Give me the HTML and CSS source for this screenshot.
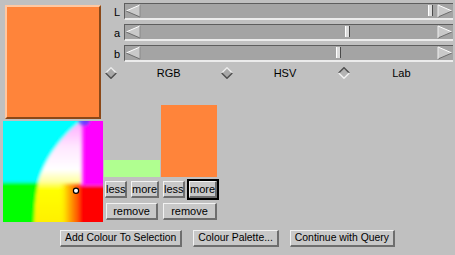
FILE: index.html
```html
<!DOCTYPE HTML>
<html>
<head>
<meta http-equiv="Content-Type" content="text/html; charset=utf-8">
<title>Colour Chooser</title>
<link rel="stylesheet" href="styles.css">
</head>
<body>
<div class="app">
	<div class="top">
		<div class="left">
			<div class="swatch"></div>
			<div class="map">
				<svg width="100" height="101" viewBox="0 0 100 100" preserveAspectRatio="none">
					<defs>
						<filter id="soft" x="-20%" y="-20%" width="140%" height="140%"><feGaussianBlur stdDeviation="1.6"/></filter>
						<linearGradient id="glow" gradientUnits="userSpaceOnUse" x1="0" y1="0" x2="0" y2="100">
							<stop offset="0" stop-color="#ffa8ff"/>
							<stop offset="0.25" stop-color="#ffe6ff"/>
							<stop offset="0.48" stop-color="#ffffff"/>
							<stop offset="0.6" stop-color="#ffffa0"/>
							<stop offset="0.68" stop-color="#ffff00"/>
							<stop offset="1" stop-color="#fff000"/>
						</linearGradient>
						<linearGradient id="warm" gradientUnits="userSpaceOnUse" x1="56" y1="0" x2="80" y2="0">
							<stop offset="0" stop-color="#ffff00" stop-opacity="0"/>
							<stop offset="0.35" stop-color="#ffc000"/>
							<stop offset="0.8" stop-color="#ff5000"/>
							<stop offset="1" stop-color="#ff0000"/>
						</linearGradient>
						<linearGradient id="mag" gradientUnits="userSpaceOnUse" x1="76" y1="0" x2="82" y2="0">
							<stop offset="0" stop-color="#ff90ff"/>
							<stop offset="1" stop-color="#ff00ff"/>
						</linearGradient>
					</defs>
					<rect x="-10" y="-10" width="120" height="120" fill="#00ffff"/>
					<g filter="url(#soft)">
						<rect x="-10" y="-10" width="120" height="120" fill="#00ffff"/>
						<rect x="-10" y="61" width="50" height="60" fill="#00ff00"/>
						<path d="M80,-10 L78,0 Q50,22 38,52 Q31,70 31,110 L110,110 L110,-10 Z" fill="url(#glow)"/>
						<rect x="56" y="62" width="26" height="50" fill="url(#warm)"/>
						<rect x="78" y="64" width="40" height="50" fill="#ff0000"/>
						<rect x="78" y="-10" width="40" height="74" fill="url(#mag)"/>
						<ellipse cx="81" cy="0" rx="6" ry="5" fill="#3050ff" opacity="0.7"/>
					</g>
					<circle cx="73" cy="69" r="2.6" fill="#fff" stroke="#000" stroke-width="1.2"/>
				</svg>
			</div>
		</div>
		<div class="right">
			<div class="row">
				<span class="lbl">L</span>
				<div class="track">
					<svg class="arrow" width="16" height="14" viewBox="0 0 16 14"><polygon points="1,7 15,1 15,13" fill="#c9c9c9"/><line x1="1" y1="7" x2="15" y2="1" stroke="#fff"/><line x1="1" y1="7" x2="15" y2="13" stroke="#6d6d6d"/><line x1="15" y1="1" x2="15" y2="13" stroke="#8a8a8a"/></svg>
					<div class="rail"><span class="thumb" style="left:97%"></span></div>
					<svg class="arrow" width="16" height="14" viewBox="0 0 16 14"><polygon points="15,7 1,1 1,13" fill="#c9c9c9"/><line x1="15" y1="7" x2="1" y2="1" stroke="#fff"/><line x1="15" y1="7" x2="1" y2="13" stroke="#6d6d6d"/><line x1="1" y1="1" x2="1" y2="13" stroke="#f0f0f0"/></svg>
				</div>
			</div>
			<div class="row">
				<span class="lbl">a</span>
				<div class="track">
					<svg class="arrow" width="16" height="14" viewBox="0 0 16 14"><polygon points="1,7 15,1 15,13" fill="#c9c9c9"/><line x1="1" y1="7" x2="15" y2="1" stroke="#fff"/><line x1="1" y1="7" x2="15" y2="13" stroke="#6d6d6d"/><line x1="15" y1="1" x2="15" y2="13" stroke="#8a8a8a"/></svg>
					<div class="rail"><span class="thumb" style="left:69%"></span></div>
					<svg class="arrow" width="16" height="14" viewBox="0 0 16 14"><polygon points="15,7 1,1 1,13" fill="#c9c9c9"/><line x1="15" y1="7" x2="1" y2="1" stroke="#fff"/><line x1="15" y1="7" x2="1" y2="13" stroke="#6d6d6d"/><line x1="1" y1="1" x2="1" y2="13" stroke="#f0f0f0"/></svg>
				</div>
			</div>
			<div class="row">
				<span class="lbl">b</span>
				<div class="track">
					<svg class="arrow" width="16" height="14" viewBox="0 0 16 14"><polygon points="1,7 15,1 15,13" fill="#c9c9c9"/><line x1="1" y1="7" x2="15" y2="1" stroke="#fff"/><line x1="1" y1="7" x2="15" y2="13" stroke="#6d6d6d"/><line x1="15" y1="1" x2="15" y2="13" stroke="#8a8a8a"/></svg>
					<div class="rail"><span class="thumb" style="left:65.8%"></span></div>
					<svg class="arrow" width="16" height="14" viewBox="0 0 16 14"><polygon points="15,7 1,1 1,13" fill="#c9c9c9"/><line x1="15" y1="7" x2="1" y2="1" stroke="#fff"/><line x1="15" y1="7" x2="1" y2="13" stroke="#6d6d6d"/><line x1="1" y1="1" x2="1" y2="13" stroke="#f0f0f0"/></svg>
				</div>
			</div>

			<div class="modes">
				<div class="mode">
					<svg class="dia" width="12" height="12" viewBox="0 0 12 12"><polygon points="6,0 12,6 6,12 0,6" fill="#a8a8a8"/><polyline points="0.7,6 6,0.7 11.3,6" fill="none" stroke="#ececec" stroke-width="1.4"/><polyline points="0.7,6 6,11.3 11.3,6" fill="none" stroke="#505050" stroke-width="1.4"/></svg>
					<span>RGB</span>
				</div>
				<div class="mode">
					<svg class="dia" width="12" height="12" viewBox="0 0 12 12"><polygon points="6,0 12,6 6,12 0,6" fill="#a8a8a8"/><polyline points="0.7,6 6,0.7 11.3,6" fill="none" stroke="#ececec" stroke-width="1.4"/><polyline points="0.7,6 6,11.3 11.3,6" fill="none" stroke="#505050" stroke-width="1.4"/></svg>
					<span>HSV</span>
				</div>
				<div class="mode">
					<svg class="dia" width="12" height="12" viewBox="0 0 12 12"><polygon points="6,0 12,6 6,12 0,6" fill="#b4b4b4"/><polyline points="0.7,6 6,0.7 11.3,6" fill="none" stroke="#505050" stroke-width="1.4"/><polyline points="0.7,6 6,11.3 11.3,6" fill="none" stroke="#f2f2f2" stroke-width="1.4"/></svg>
					<span>Lab</span>
				</div>
			</div>

			<div class="pickers">
				<div class="pick">
					<div class="well"><div class="chip" style="height:17px; background:#b0ff90"></div></div>
					<div class="btns first">
						<button class="btn less">less</button>
						<button class="btn more">more</button>
					</div>
					<button class="btn remove">remove</button>
				</div>
				<div class="pick">
					<div class="well"><div class="chip" style="height:72px; background:#ff843a"></div></div>
					<div class="btns second">
						<button class="btn less">less</button>
						<span class="focus"><button class="btn more">more</button></span>
					</div>
					<button class="btn remove wide">remove</button>
				</div>
			</div>
		</div>
	</div>

	<div class="actions">
		<button class="btn big">Add Colour To Selection</button>
		<button class="btn big">Colour Palette...</button>
		<button class="btn big">Continue with Query</button>
	</div>
</div>
</body>
</html>
```

FILE: styles.css
```css
body{margin:0; background-color:#c0c0c0; color:#000; font-family:"Liberation Sans", Arial, sans-serif; font-size:11px;}
.app{width:455px; height:255px; box-sizing:border-box; padding:3px 2px 0 3px;}
.top{display:flex;}

.left{width:100px; padding-top:2px; display:flex; flex-direction:column; gap:2px;}
.swatch{margin:0 2px; height:114px; box-sizing:border-box; background-color:#ff843a; border:2px solid; border-color:#ffc8a2 #8a4818 #8a4818 #ffc8a2;}
.map{height:101px; overflow:hidden;}
.map svg{display:block;}

.right{margin-left:1px; width:349px;}
.row{display:flex; align-items:center; height:17px; margin-bottom:4px;}
.lbl{width:20px; padding-right:4px; box-sizing:border-box; text-align:right; font-size:11px;}
.track{flex:1; height:17px; box-sizing:border-box; display:flex; align-items:center; background-color:#a4a4a4; border-top:1px solid #5e5e5e; border-left:1px solid #5e5e5e; border-bottom:2px solid #ececec;}
.arrow{display:block; flex:none;}
.rail{flex:1; height:100%; position:relative;}
.thumb{position:absolute; top:1px; width:3px; height:11px; background-color:#dcdcdc; border-left:1px solid #fff; border-right:1px solid #4a4a4a;}

.modes{display:flex; margin-top:4px; height:14px;}
.mode{flex:1; display:flex; align-items:center; padding-left:1px;}
.dia{display:block; flex:none;}
.mode span{flex:1; text-align:center; font-size:11px;}

.pickers{display:flex; gap:1px; margin-top:25px;}
.pick{width:56px; display:flex; flex-direction:column;}
.well{height:72px; display:flex; align-items:flex-end;}
.chip{width:100%;}
.btns{display:flex; align-items:center; height:20px; margin-top:2px;}
.btns.first{padding-left:1px; gap:4px;}
.btns.second{padding-left:2px; gap:2px;}

.btn{margin:0; padding:0; height:17px; box-sizing:border-box; background-color:#c8c8c8; color:#000; font-family:"Liberation Sans", Arial, sans-serif; font-size:11px; line-height:14px; border:1px solid; border-width:1px 2px 2px 1px; border-color:#f2f2f2 #6e6e6e #6e6e6e #f2f2f2; border-radius:0;}
.less{width:22px;}
.more{width:28px;}
.focus{display:block; border:2px solid #000; height:17px;}
.focus .btn{display:block; height:17px;}
.remove{width:52px; margin:4px 0 0 2px;}
.remove.wide{width:54px;}

.actions{display:flex; justify-content:center; gap:11px; margin-top:8px; padding-right:1px;}
.big{padding:0 4px; font-size:10.4px; height:17px;}
```
